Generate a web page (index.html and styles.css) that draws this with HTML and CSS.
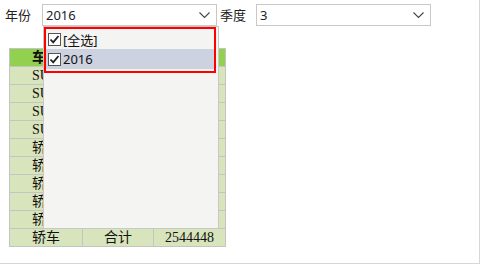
FILE: index.html
```
<!DOCTYPE html>
<html>

<head>
    <title>报表</title>
    <link rel="stylesheet" href="styles.css">
</head>

<body>
    <div class="page">
        <!-- 顶部筛选条 -->
        <div class="filter-bar">
            <span class="label">年份</span>
            <div class="combo">
                <span class="combo-text">2016</span>
                <svg class="arrow" width="11" height="7" viewBox="0 0 11 7"><polyline points="0.5,0.5 5.5,5.5 10.5,0.5" fill="none" stroke="#444" stroke-width="1.1"/></svg>
            </div>
            <span class="label label-second">季度</span>
            <div class="combo">
                <span class="combo-text">3</span>
                <svg class="arrow" width="11" height="7" viewBox="0 0 11 7"><polyline points="0.5,0.5 5.5,5.5 10.5,0.5" fill="none" stroke="#444" stroke-width="1.1"/></svg>
            </div>
        </div>

        <!-- 数据表 -->
        <table class="report">
            <tr class="head">
                <td>车型</td>
                <td>类别</td>
                <td>销量</td>
            </tr>
            <tr><td>SUV</td><td>自主</td><td>412300</td></tr>
            <tr><td>SUV</td><td>合资</td><td>387210</td></tr>
            <tr><td>SUV</td><td>进口</td><td>52018</td></tr>
            <tr><td>SUV</td><td>合计</td><td>851528</td></tr>
            <tr><td>轿车</td><td>自主</td><td>640120</td></tr>
            <tr><td>轿车</td><td>合资</td><td>1482300</td></tr>
            <tr><td>轿车</td><td>进口</td><td>98214</td></tr>
            <tr><td>轿车</td><td>新能源</td><td>161286</td></tr>
            <tr><td>轿车</td><td>其他</td><td>162528</td></tr>
            <tr><td>轿车</td><td>合计</td><td>2544448</td></tr>
        </table>

        <!-- 年份下拉列表 -->
        <div class="dropdown">
            <div class="choice-box">
                <div class="choice">
                    <svg class="check" width="13" height="13" viewBox="0 0 13 13"><rect x="0.5" y="0.5" width="12" height="12" fill="#fff" stroke="#555"/><polyline points="2.5,6.5 5.2,9.4 10.5,3" fill="none" stroke="#222" stroke-width="1.8"/></svg>
                    <span>[全选]</span>
                </div>
                <div class="choice selected">
                    <svg class="check" width="13" height="13" viewBox="0 0 13 13"><rect x="0.5" y="0.5" width="12" height="12" fill="#fff" stroke="#555"/><polyline points="2.5,6.5 5.2,9.4 10.5,3" fill="none" stroke="#222" stroke-width="1.8"/></svg>
                    <span>2016</span>
                </div>
            </div>
        </div>
    </div>
</body>

</html>
```

FILE: styles.css
```
html,
body {
    margin: 0;
    padding: 0;
    background: #fff;
}

.page {
    position: relative;
    width: 479px;
    height: 263px;
    border-right: 1px solid #d6d6d6;
    border-bottom: 1px solid #d6d6d6;
    font-family: "Noto Sans", "Noto Sans CJK SC", sans-serif;
    font-size: 13px;
    color: #222;
}

/* 顶部筛选条 */
.filter-bar {
    display: flex;
    align-items: center;
    padding-top: 4px;
    height: 22px;
}

.label {
    width: 37px;
    padding-left: 5px;
    line-height: 22px;
}

.label-second {
    width: 36px;
    padding-left: 3px;
}

.combo {
    display: flex;
    align-items: center;
    justify-content: space-between;
    width: 164px;
    height: 20px;
    border: 1px solid #c8c8c8;
    padding: 0 6px 0 3px;
}

.combo-text {
    line-height: 20px;
}

.arrow {
    display: block;
}

/* 数据表 */
.report {
    border-collapse: collapse;
    margin: 22px 0 0 9px;
    width: 217px;
    font-family: "Liberation Serif", "Noto Sans CJK SC", serif;
    font-size: 14px;
    color: #111;
}

.report td {
    height: 17px;
    padding: 0;
    text-align: center;
    line-height: 17px;
    border: 1px solid #c4c4c4;
    background: #d8e4bc;
}

.report td:nth-child(1) {
    width: 72px;
}

.report td:nth-child(2) {
    width: 70px;
}

.report .head td {
    background: #92d050;
    font-weight: bold;
}

/* 下拉列表 */
.dropdown {
    position: absolute;
    left: 43px;
    top: 26px;
    width: 174px;
    height: 201px;
    border: 1px solid #c8c8c8;
    background: #f4f4f2;
}

.choice-box {
    width: 168px;
    border: 2px solid #ff0000;
    padding-bottom: 2px;
}

.choice {
    display: flex;
    align-items: center;
    height: 20px;
    padding-left: 2px;
    gap: 2px;
    font-family: "Noto Sans", "Noto Sans CJK SC", sans-serif;
    font-size: 13px;
    color: #111;
}

.choice.selected {
    background: #ccd2e0;
}

.check {
    display: block;
}
```
